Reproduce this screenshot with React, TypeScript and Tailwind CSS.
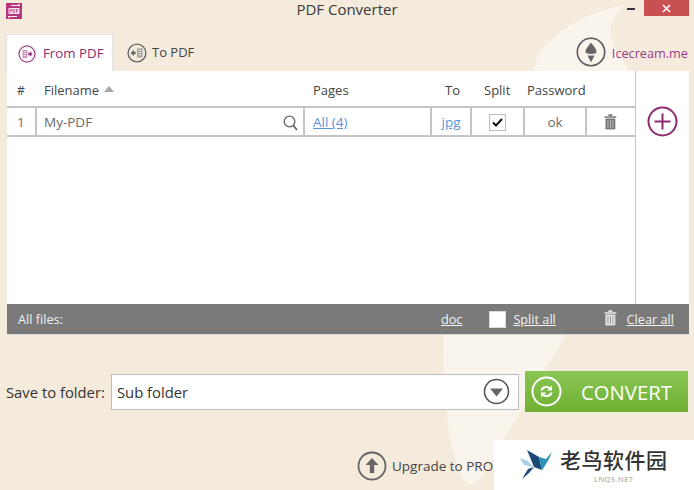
import React from "react";

function Trash({ color, stripe, size = 16 }: { color: string; stripe: string; size?: number }) {
  return (
    <svg width={size * 0.8} height={size} viewBox="0 0 13 16" fill="none">
      <path d="M4.500 1h4M0.500 3h12" stroke={color} strokeWidth="1.600" />
      <path d="M1.500 4.500h10V15.500h-10z" fill={color} />
      <path d="M4 6v8M6.500 6v8M9 6v8" stroke={stripe} strokeWidth="0.9" />
    </svg>
  );
}

function TabIcon({ color, from, size }: { color: string; from: boolean; size: number }) {
  return (
    <svg width={size} height={size} viewBox="0 0 22 22" fill="none">
      <circle cx="11" cy="11" r="9.800" stroke={color} strokeWidth="1.500" />
      {from ? (
        <>
          <rect x="5.500" y="6" width="6" height="10" fill={color} fillOpacity="0.55" />
          <path d="M7 8h3M7 10.500h3M7 13h3" stroke="#fff" strokeWidth="0.9" />
          <path d="M12.500 9.500h2V7.500l3.500 3.500-3.500 3.500v-2h-2z" fill={color} />
        </>
      ) : (
        <>
          <rect x="11" y="6" width="6" height="10" fill={color} fillOpacity="0.55" />
          <path d="M12.500 8h3M12.500 10.500h3M12.500 13h3" stroke="#fff" strokeWidth="0.9" />
          <path d="M4 11l3.500-3.500v2h2v3h-2v2z" fill={color} />
        </>
      )}
    </svg>
  );
}

function Cell({ children, cls = "justify-center" }: { children?: React.ReactNode; cls?: string }) {
  return <div className={"flex h-full items-center border-r-2 border-[#c4c4c4] pt-[2px] " + cls}>{children}</div>;
}

export default function App() {
  return (
    <div className="relative h-[490px] w-[694px] overflow-hidden bg-[#f4ebdc] font-['Open_Sans','Noto_Sans',sans-serif] text-[13px] text-[#3c3c3c]">
      {/* background swirl */}
      <svg className="absolute inset-0" width="694" height="490" viewBox="0 0 694 490" fill="none">
        <path
          d="M625 5C585 12 540 35 533 71C525 150 455 250 443 335C444 400 448 450 462 478Q470 492 482 476L566 335C600 250 640 120 630 71C615 50 598 28 625 5Z"
          fill="#f9f4ec"
        />
      </svg>

      <div className="relative flex h-full flex-col">
        {/* title bar */}
        <div className="relative flex h-[34px] shrink-0 justify-center">
          <div className="absolute left-[6px] top-[3px] flex h-[16px] w-[16px] items-center justify-center bg-[#b5357f]">
            <svg width="16" height="16" viewBox="0 0 16 16" fill="none">
              <path d="M5 2.500h9M14 2.500l-2-1.500M2 13.500h9M2 13.500l2 1.500" stroke="#fff" strokeWidth="0.9" />
              <rect x="2.500" y="5" width="11" height="6" fill="#fff" fillOpacity="0.85" />
              <path d="M4 6.500v3M4 6.500h1.500v1.300H4M7 6.500v3h1.200l.6-1.500-.6-1.500zM10.500 9.500v-3H12M10.500 8H12" stroke="#b5357f" strokeWidth="0.7" />
            </svg>
          </div>
          <span className="text-[15px] leading-[18px] text-[#3a3a3a]">PDF Converter</span>
          <div className="absolute left-[627px] top-[8px] h-[2px] w-[8px] bg-[#333]" />
          <div className="absolute left-[644px] top-0 flex h-[16px] w-[45px] items-center justify-center bg-[#c75050]">
            <svg width="9" height="9" viewBox="0 0 9 9">
              <path d="M1 1l7 7M8 1l-7 7" stroke="#fff" strokeWidth="1.600" />
            </svg>
          </div>
        </div>

        {/* tabs */}
        <div className="relative flex h-[37px] shrink-0 pl-[6px]">
          <div className="flex w-[107px] items-center gap-[7px] border-x border-t border-[#e3e3e3] bg-white pl-[11px] pt-[1px] text-[13.300px] text-[#8e2a6e]">
            <TabIcon color="#a03d80" from size={18} />
            <span>From PDF</span>
          </div>
          <div className="flex items-center gap-[5px] pl-[14px] pt-[1px] text-[#444]">
            <TabIcon color="#666" from={false} size={20} />
            <span>To PDF</span>
          </div>
          <div className="ml-auto flex items-center gap-[6px] pb-[1px] pr-[6px] text-[12.700px] text-[#9a3a8a]">
            <svg width="30" height="30" viewBox="0 0 30 30" fill="none">
              <circle cx="15" cy="15" r="13.700" stroke="#5a5a5a" strokeWidth="1.600" />
              <path d="M15 5.500C12.800 8.500 9.500 12 9.500 14.500c0 1.800 2 2.500 5.500 2.500s5.500-.7 5.500-2.500C20.500 12 17.200 8.500 15 5.500z" fill="#666" />
              <path d="M11.500 18.500h7L15 25.500z" fill="#666" />
            </svg>
            <span className="pt-[4px]">Icecream.me</span>
          </div>
        </div>

        {/* panel */}
        <div className="ml-[7px] mr-[5px] flex h-[264px] shrink-0 flex-col border-b border-[#d9d9d9] bg-white">
          <div className="flex min-h-0 flex-1">
            <div className="flex w-[629px] flex-col border-r border-[#c4c4c4]">
              <div className="grid h-[37px] shrink-0 grid-cols-[30px_268px_127px_40px_53px_62px_48px] items-center border-b-2 border-[#c4c4c4] pt-[4px] text-[#444]">
                <span className="pl-[10px] text-[12px]">#</span>
                <span className="flex items-center gap-[5px] pl-[7px]">
                  Filename
                  <svg width="10" height="6" viewBox="0 0 10 6" className="mb-[4px]">
                    <path d="M5 0l5 6H0z" fill="#a8a8a8" />
                  </svg>
                </span>
                <span className="pl-[8px]">Pages</span>
                <span className="pl-[13px]">To</span>
                <span className="pl-[12px]">Split</span>
                <span className="pl-[2px]">Password</span>
                <span />
              </div>
              <div className="grid h-[29px] shrink-0 grid-cols-[30px_268px_127px_40px_53px_62px_48px] items-center border-b-2 border-[#c4c4c4] text-[13.500px] text-[#6b6b6b]">
                <Cell cls="justify-start pl-[10px]">1</Cell>
                <Cell cls="justify-between pl-[7px] pr-[5px]">
                  <span>My-PDF</span>
                  <svg width="15" height="16" viewBox="0 0 15 16" fill="none">
                    <circle cx="6.500" cy="6.500" r="5.300" stroke="#666" strokeWidth="1.300" />
                    <path d="M10.500 10.500L14 15" stroke="#666" strokeWidth="1.800" />
                  </svg>
                </Cell>
                <Cell cls="justify-start pl-[8px]">
                  <span className="text-[#5a93d8] underline">All (4)</span>
                </Cell>
                <Cell>
                  <span className="text-[#5a93d8] underline">jpg</span>
                </Cell>
                <Cell>
                  <div className="flex h-[17px] w-[17px] items-center justify-center border border-[#bdbdbd]">
                    <svg width="11" height="9" viewBox="0 0 11 9" fill="none">
                      <path d="M1 4.500L4 7.500L10 1" stroke="#111" strokeWidth="2" />
                    </svg>
                  </div>
                </Cell>
                <Cell>ok</Cell>
                <div className="flex h-full items-center justify-center pr-[1px]">
                  <Trash color="#777" stripe="#c8c8c8" />
                </div>
              </div>
              <div className="flex-1" />
            </div>
            <div className="flex flex-1 items-start justify-center pt-[35px]">
              <svg width="31" height="31" viewBox="0 0 31 31" fill="none">
                <circle cx="15.500" cy="15.500" r="14" stroke="#8e2a6e" strokeWidth="2" />
                <path d="M15.500 7.500v16M7.500 15.500h16" stroke="#8e2a6e" strokeWidth="2" />
              </svg>
            </div>
          </div>
          <div className="flex h-[30px] shrink-0 items-center bg-[#7a7a7a] pt-[1px] text-[12.700px] text-[#f2f2f2]">
            <span className="ml-[11px]">All files:</span>
            <span className="ml-[378px] underline">doc</span>
            <div className="ml-[27px] h-[17px] w-[17px] border border-[#dcdcdc] bg-white" />
            <span className="ml-[7px] underline">Split all</span>
            <span className="mb-[3px] ml-[48px]">
              <Trash color="#e8e8e8" stripe="#8a8a8a" />
            </span>
            <span className="ml-[10px] underline">Clear all</span>
          </div>
        </div>

        {/* save row */}
        <div className="mt-[36px] flex h-[41px] shrink-0 items-center pl-[6px]">
          <span className="w-[105px] shrink-0 pt-[2px] text-[14.800px] text-[#333]">Save to folder:</span>
          <div className="flex h-[36px] w-[408px] items-center justify-between border border-[#bcbcbc] bg-white pl-[5px] pr-[8px] text-[14.800px] text-[#333]">
            <span className="pt-[2px]">Sub folder</span>
            <svg width="27" height="27" viewBox="0 0 27 27" fill="none">
              <circle cx="13.500" cy="13.500" r="12" stroke="#555" strokeWidth="1.600" />
              <path d="M7 10.500h13l-6.500 8z" fill="#666" />
            </svg>
          </div>
          <div className="ml-[6px] flex h-[41px] w-[163px] items-center bg-gradient-to-b from-[#8ac653] to-[#6fb032] pl-[6px] text-[20.300px] text-white">
            <svg width="31" height="31" viewBox="0 0 31 31" fill="none">
              <circle cx="15.500" cy="15.500" r="14" stroke="#fff" strokeWidth="2" />
              <path d="M10.500 14.500c.6-2.300 2.600-3.500 5-3.500 1.400 0 2.600.5 3.400 1.300M20.500 16.500c-.6 2.300-2.600 3.500-5 3.500-1.400 0-2.600-.5-3.400-1.300" stroke="#fff" strokeWidth="2.200" />
              <path d="M21 9.500v5h-5zM10 21.500v-5h5z" fill="#fff" />
            </svg>
            <span className="ml-[19px] pt-[2px]">CONVERT</span>
          </div>
        </div>

        {/* footer */}
        <div className="mt-[39px] flex items-center pl-[357px]">
          <svg width="30" height="30" viewBox="0 0 30 30" fill="none">
            <circle cx="15" cy="15" r="13.500" stroke="#666" strokeWidth="1.800" />
            <path d="M15 7l6.500 7h-4.300v8h-4.400v-8H8.500z" fill="#666" />
          </svg>
          <span className="ml-[5px] text-[13.500px] text-[#444]">Upgrade to PRO</span>
        </div>
      </div>

      {/* watermark */}
      <div className="absolute bottom-0 right-0 flex h-[50px] w-[200px] items-start bg-white pl-[26px] pt-[7px]">
        <svg width="34" height="30" viewBox="0 0 34 30" fill="none" className="mt-[3px]">
          <path d="M7 0l12 7 3 13-8-3z" fill="#1d4a78" />
          <path d="M19 7l7 2 6-7-3 7-6 10-1 1z" fill="#2f93b8" />
          <path d="M14 17l-5 6-7 6 6-10z" fill="#1d4a78" />
          <path d="M0 8l8 3 5 6-9-2z" fill="#a9d0e4" />
        </svg>
        <div className="ml-[6px] flex flex-col items-center">
          <span className="font-['Noto_Sans_CJK_SC',sans-serif] text-[21px] font-medium leading-[24px] tracking-[0.500px] text-[#333]">老鸟软件园</span>
          <span className="mt-[4px] text-[7.500px] leading-[9px] tracking-[0.500px] text-[#999]">LNQS.NET</span>
        </div>
      </div>
    </div>
  );
}
